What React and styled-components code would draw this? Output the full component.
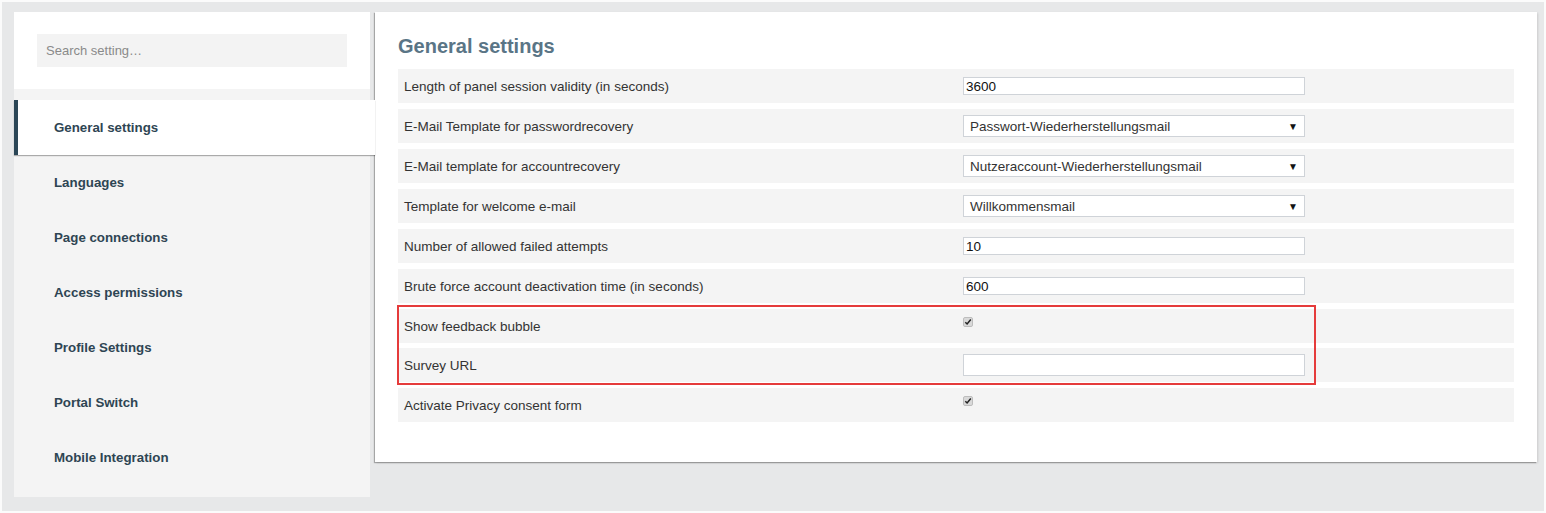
import React from "react";
import styled, { createGlobalStyle } from "styled-components";

const Global = createGlobalStyle`
  html, body { margin: 0; padding: 0; background: #e7e8e9; }
  body { font-family: "Liberation Sans", Arial, sans-serif; }
`;

const Page = styled.div`
  display: flex;
  align-items: flex-start;
  box-sizing: border-box;
  width: 1546px;
  height: 513px;
  border: 2px solid #fbfbfb;
  background: #e7e8e9;
  padding: 10px 7px 0 12px;
`;

const Sidebar = styled.aside`
  width: 356px;
  flex-shrink: 0;
  display: flex;
  flex-direction: column;
`;

const SearchBox = styled.div`
  background: #fff;
  height: 77px;
  box-sizing: border-box;
  padding: 22px 23px 0;
`;

const SearchInput = styled.input`
  box-sizing: border-box;
  width: 310px;
  height: 33px;
  border: none;
  outline: none;
  background: #f3f3f3;
  padding: 0 9px;
  font-family: inherit;
  font-size: 13px;
  color: #555;
  &::placeholder { color: #8a8a8a; }
`;

const NavList = styled.nav`
  background: #f4f4f4;
  padding: 11px 0 12px;
  display: flex;
  flex-direction: column;
`;

const NavItem = styled.div`
  position: relative;
  z-index: 1;
  height: 55px;
  display: flex;
  align-items: center;
  box-sizing: border-box;
  padding-left: ${p => (p.active ? "36px" : "40px")};
  margin-right: ${p => (p.active ? "-5px" : "0")};
  background: ${p => (p.active ? "#fff" : "transparent")};
  border-left: ${p => (p.active ? "4px solid #2b4656" : "none")};
  box-shadow: ${p => (p.active ? "0 1px 1px rgba(0,0,0,0.3)" : "none")};
  font-size: 13.3px;
  font-weight: 700;
  color: #2e4553;
`;

const Panel = styled.main`
  width: 1162px;
  margin-left: 5px;
  box-sizing: border-box;
  background: #fff;
  padding: 22px 23px 40px;
  box-shadow: -1px 1px 1px rgba(0, 0, 0, 0.28), 1px 1px 2px rgba(0, 0, 0, 0.12);
`;

const Title = styled.h1`
  margin: 0 0 11px;
  font-size: 20px;
  line-height: 24px;
  font-weight: 700;
  color: #5a7586;
`;

const Rows = styled.div`
  display: flex;
  flex-direction: column;
  gap: 6px;
`;

const Group = styled.div`
  position: relative;
  display: flex;
  flex-direction: column;
  gap: 5px;
`;

const Highlight = styled.span`
  position: absolute;
  left: -1px;
  top: -4px;
  width: 919px;
  height: 80px;
  box-sizing: border-box;
  border: 2px solid #e53b3b;
  pointer-events: none;
`;

const Row = styled.div`
  height: 34px;
  background: #f4f4f4;
  display: grid;
  grid-template-columns: 565px 342px;
  align-items: center;
`;

const Label = styled.div`
  padding-left: 6px;
  font-size: 13.5px;
  color: #333;
`;

const TextField = styled.input`
  box-sizing: border-box;
  width: 342px;
  height: ${p => p.h || 18}px;
  border: 1px solid #cfd3d8;
  background: #fff;
  padding: 0 2px;
  font-family: inherit;
  font-size: 13.5px;
  color: #111;
  outline: none;
`;

const Select = styled.div`
  box-sizing: border-box;
  width: 342px;
  height: 22px;
  border: 1px solid #cfd3d8;
  background: #fff;
  display: flex;
  align-items: center;
  justify-content: space-between;
  padding: 0 6px 0 6px;
  font-size: 13.5px;
  color: #333;
`;

const Arrow = styled.span`
  font-size: 10px;
  color: #111;
`;

const Check = styled.span`
  align-self: start;
  margin-top: 8px;
  width: 10px;
  height: 10px;
  border-radius: 2px;
  background: #d9d9d9;
  border: 1px solid #bdbdbd;
  box-sizing: border-box;
  display: flex;
  align-items: center;
  justify-content: center;
`;

const Checkbox = () => (
  <Check>
    <svg width="8" height="8" viewBox="0 0 8 8">
      <path d="M1.3 4.3 L3.1 6 L6.8 1.6" fill="none" stroke="#222" strokeWidth="1.5" />
    </svg>
  </Check>
);

const nav = [
  "General settings",
  "Languages",
  "Page connections",
  "Access permissions",
  "Profile Settings",
  "Portal Switch",
  "Mobile Integration",
];

const Field = ({ type, value, h }) => {
  if (type === "select")
    return (
      <Select>
        <span>{value}</span>
        <Arrow>▼</Arrow>
      </Select>
    );
  if (type === "check") return <Checkbox />;
  return <TextField h={h} defaultValue={value} />;
};

const SettingRow = ({ label, ...field }) => (
  <Row>
    <Label>{label}</Label>
    <Field {...field} />
  </Row>
);

export default function App() {
  return (
    <>
      <Global />
      <Page>
        <Sidebar>
          <SearchBox>
            <SearchInput placeholder="Search setting…" />
          </SearchBox>
          <NavList>
            {nav.map((n, i) => (
              <NavItem key={n} active={i === 0}>
                {n}
              </NavItem>
            ))}
          </NavList>
        </Sidebar>
        <Panel>
          <Title>General settings</Title>
          <Rows>
            <SettingRow label="Length of panel session validity (in seconds)" value="3600" />
            <SettingRow label="E-Mail Template for passwordrecovery" type="select" value="Passwort-Wiederherstellungsmail" />
            <SettingRow label="E-Mail template for accountrecovery" type="select" value="Nutzeraccount-Wiederherstellungsmail" />
            <SettingRow label="Template for welcome e-mail" type="select" value="Willkommensmail" />
            <SettingRow label="Number of allowed failed attempts" value="10" />
            <SettingRow label="Brute force account deactivation time (in seconds)" value="600" />
            <Group>
              <SettingRow label="Show feedback bubble" type="check" />
              <SettingRow label="Survey URL" value="" h={22} />
              <Highlight />
            </Group>
            <SettingRow label="Activate Privacy consent form" type="check" />
          </Rows>
        </Panel>
      </Page>
    </>
  );
}
